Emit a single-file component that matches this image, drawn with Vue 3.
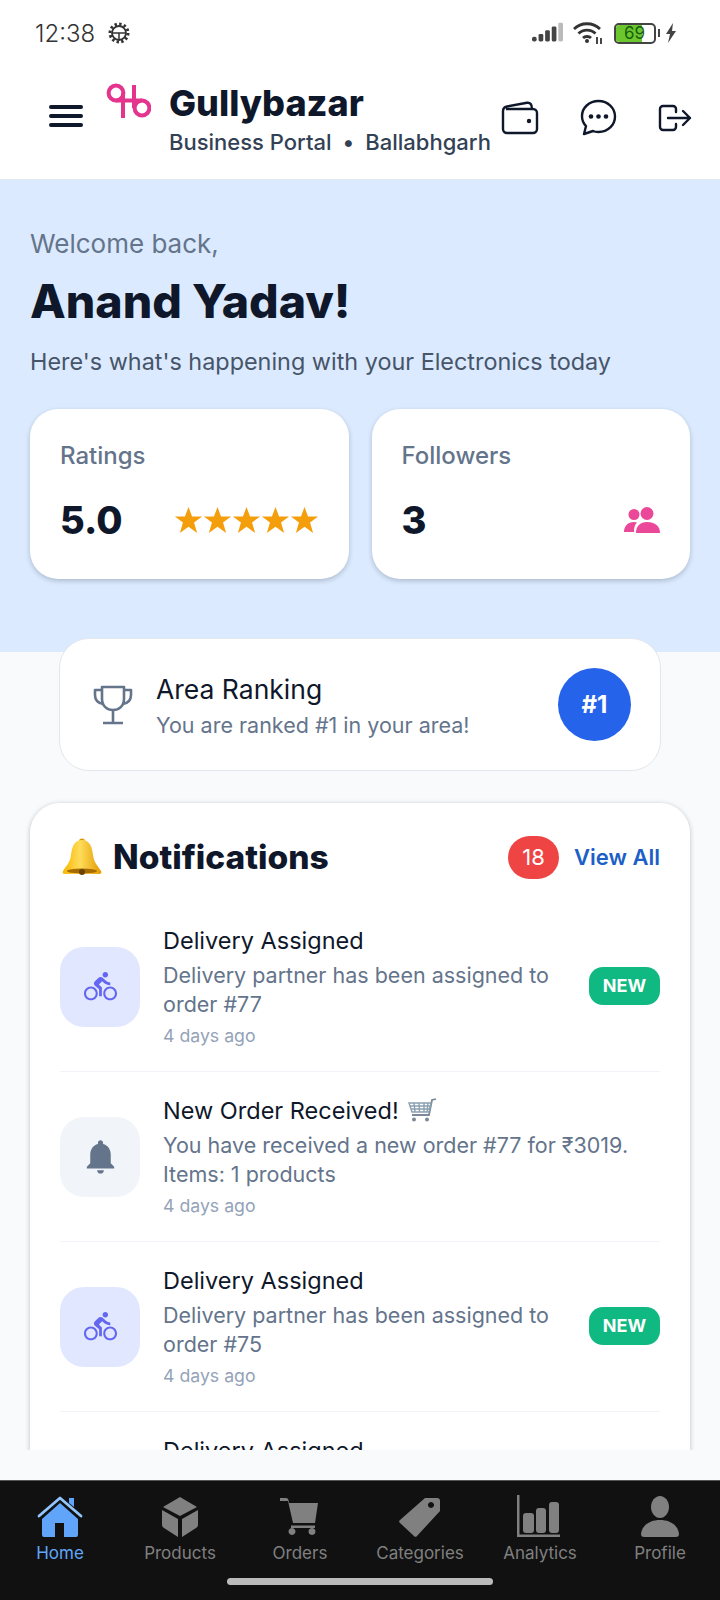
<script setup>
const notifications = [
  { title: 'Delivery Assigned', desc: 'Delivery partner has been assigned to order #77', kind: 'bike', isNew: true },
  { title: 'New Order Received!', desc: 'You have received a new order #77 for ₹3019. Items: 1 products', kind: 'bell', cart: true },
  { title: 'Delivery Assigned', desc: 'Delivery partner has been assigned to order #75', kind: 'bike', isNew: true },
  { title: 'Delivery Assigned', desc: 'Delivery partner has been assigned to order #75', kind: 'bike', isNew: true }
]

const navItems = [
  { label: 'Home', active: true, paths: [
    { d: 'M24 8L42 24V40a2 2 0 0 1-2 2H28V28H19V42H8a2 2 0 0 1-2-2V24Z' },
    { d: 'M33 3h5v9l-5-4Z' },
    { d: 'M3 21L24 3L45 21', stroke: true }
  ] },
  { label: 'Products', paths: [
    { d: 'M24 2L41 12L24 21L7 12Z' },
    { d: 'M6 15L22 24V42L8 33Q6 32 6 30Z' },
    { d: 'M42 15L26 24V42L40 33Q42 32 42 30Z' }
  ] },
  { label: 'Orders', paths: [
    { d: 'M4 3H10Q12 3 12.500 5L13 8H42L39 28H17L12 6H4Z' },
    { d: 'M15 30.500H39V33H15Z' },
    { d: 'M36 33a3.500 3.500 0 1 1-0.010 0Z' },
    { d: 'M16 33a3.500 3.500 0 1 1-0.010 0Z' }
  ] },
  { label: 'Categories', paths: [
    { d: 'M29 3H41a3 3 0 0 1 3 3V16L21 41a2 2 0 0 1-3 0L4 28a2 2 0 0 1 0-3ZM35 7a3 3 0 1 0 0.010 0Z', evenodd: true }
  ] },
  { label: 'Analytics', paths: [
    { d: 'M1 0H3.500V39.500H44V42H1Z' },
    { d: 'M10 18H15a3 3 0 0 1 3 3V35a3 3 0 0 1-3 3H10a3 3 0 0 1-3-3V21a3 3 0 0 1 3-3Z' },
    { d: 'M23 13H27a3 3 0 0 1 3 3V35a3 3 0 0 1-3 3H23a3 3 0 0 1-3-3V16a3 3 0 0 1 3-3Z' },
    { d: 'M36 7H40a3 3 0 0 1 3 3V35a3 3 0 0 1-3 3H36a3 3 0 0 1-3-3V10a3 3 0 0 1 3-3Z' }
  ] },
  { label: 'Profile', paths: [
    { d: 'M24 1C29 1 33 6 33 12S29 23 24 23S15 18 15 12S19 1 24 1Z' },
    { d: 'M8 42Q5 42 5 39C6 30 14 25 24 25S42 30 43 39Q43 42 40 42Z' }
  ] }
]
</script>

<template>
<div class="screen">
  <div class="statusBar">
    <div class="statusLeft">
      <span class="time">12:38</span>
      <svg class="gear" width="24" height="24" viewBox="0 0 24 24" fill="none" stroke="#333">
        <circle cx="12" cy="12" r="9" stroke-width="3" stroke-dasharray="2.4 2.3" />
        <circle cx="12" cy="12" r="7" stroke-width="1.800" />
        <path d="M5 12H19M12 12V19" stroke-width="1.500" />
      </svg>
    </div>
    <div class="statusRight">
      <svg width="31" height="22" viewBox="0 0 33 22" fill="#444">
        <rect x="0" y="15" width="5" height="5" rx="2" />
        <rect x="7" y="12" width="5" height="8" rx="1.500" />
        <rect x="14" y="8" width="5" height="12" rx="1.500" />
        <rect x="21" y="4" width="5" height="16" rx="1.500" />
        <rect x="28" y="0" width="5" height="20" rx="1.500" fill="#bbb" />
      </svg>
      <svg class="wifi" width="32" height="24" viewBox="0 0 32 24" fill="none" stroke="#333" stroke-width="2.800">
        <path d="M2 8C9 1 21 1 28 8" />
        <path d="M6.500 12.500C11 8 19 8 23.500 12.500" />
        <path d="M11 17C13 15 17 15 19 17" />
        <circle cx="15" cy="20" r="2" fill="#333" stroke="none" />
        <path d="M25 16V23M29 17V23" stroke-width="1.800" />
      </svg>
      <div class="battery">
        <div class="batteryFill"></div>
        <span class="batteryText">69</span>
      </div>
      <div class="batteryTip"></div>
      <svg class="bolt" width="12" height="20" viewBox="0 0 12 20" fill="#444">
        <path d="M8 0L1 11H5L3 20L11 8H7Z" />
      </svg>
    </div>
  </div>

  <header class="header">
    <button class="menu"><span></span><span></span><span></span></button>
    <svg class="logo" width="45" height="36" viewBox="0 0 45 36" fill="none" stroke="#e5348e" stroke-width="4">
      <circle cx="10" cy="10" r="7.400" />
      <circle cx="36" cy="25" r="7.400" />
      <path d="M17 10V35M28 2V25M10 17.400H36" />
    </svg>
    <div class="brand">
      <div class="brandName">Gullybazar</div>
      <div class="brandSub"><span>Business Portal</span><span class="dot">•</span><span>Ballabhgarh</span></div>
    </div>
    <div class="headerIcons">
      <svg width="38" height="34" viewBox="0 0 38 34" fill="none" stroke="#0f172a" stroke-width="2.400" stroke-linejoin="round">
        <path d="M2 10V28a4 4 0 0 0 4 4H32a4 4 0 0 0 4-4V12a4 4 0 0 0-4-4H5" />
        <path d="M2 10C2 7 4 6 6 5.500L26 1.800C29 1.300 31 3 31 8" />
        <circle cx="28" cy="20" r="2.200" fill="#0f172a" stroke="none" />
      </svg>
      <svg width="37" height="37" viewBox="0 0 37 37" fill="none" stroke="#0f172a" stroke-width="2.400" stroke-linejoin="round">
        <path d="M18.500 2C9 2 2 9 2 17C2 21 3.500 24.500 6 27L4 35L13 32C15 33 17 33 18.500 33C28 33 35 26 35 17.500C35 9 28 2 18.500 2Z" />
        <circle cx="11" cy="17.500" r="2.300" fill="#0f172a" stroke="none" />
        <circle cx="18.500" cy="17.500" r="2.300" fill="#0f172a" stroke="none" />
        <circle cx="26" cy="17.500" r="2.300" fill="#0f172a" stroke="none" />
      </svg>
      <svg width="34" height="28" viewBox="0 0 34 28" fill="none" stroke="#0f172a" stroke-width="2.400" stroke-linecap="round" stroke-linejoin="round">
        <path d="M18 8V5a3 3 0 0 0-3-3H5a3 3 0 0 0-3 3V23a3 3 0 0 0 3 3H15a3 3 0 0 0 3-3V20" />
        <path d="M10 14H32M25 7L32 14L25 21" />
      </svg>
    </div>
  </header>

  <main class="content">
    <section class="hero">
      <div class="welcome">Welcome back,</div>
      <h1 class="userName">Anand Yadav!</h1>
      <p class="heroSub">Here's what's happening with your Electronics today</p>
      <div class="stats">
        <div class="statCard">
          <div class="statLabel">Ratings</div>
          <div class="statRow">
            <span class="statValue">5.0</span>
            <span class="stars">
              <svg v-for="n in 5" :key="n" width="29" height="26" viewBox="0 0 24 22" fill="#f59e0b">
                <path d="M12 0L15 8H23.500L16.700 13.200L19.300 22L12 16.700L4.700 22L7.300 13.200L0.500 8H9Z" />
              </svg>
            </span>
          </div>
        </div>
        <div class="statCard">
          <div class="statLabel">Followers</div>
          <div class="statRow">
            <span class="statValue">3</span>
            <svg width="36" height="27" viewBox="0 0 36 27" fill="#ec4899">
              <circle cx="10" cy="7.500" r="5.500" />
              <circle cx="23" cy="6.500" r="6.500" />
              <path d="M0 25C0 19 4 15 10 15C11 15 12 15.200 13 15.500C10.500 18 10 21 10 25Z" />
              <path d="M12 26C12 19 16 15 23 15C31 15 36 19 36 26Z" />
            </svg>
          </div>
        </div>
      </div>
    </section>

    <section class="rankCard">
      <svg class="trophy" width="40" height="40" viewBox="0 0 40 40" fill="none" stroke="#64748b" stroke-width="2.600" stroke-linejoin="round">
        <path d="M9 2H31V14C31 21 26 25 20 25C14 25 9 21 9 14Z" />
        <path d="M9 5H2V10C2 15 5 18 10 19M31 5H38V10C38 15 35 18 30 19" />
        <path d="M20 25V37M10 38H30" />
      </svg>
      <div class="rankText">
        <div class="rankTitle">Area Ranking</div>
        <div class="rankSub">You are ranked #1 in your area!</div>
      </div>
      <div class="rankBadge">#1</div>
    </section>

    <section class="notifCard">
      <div class="notifHeader">
        <svg class="bellEmoji" width="42" height="38" viewBox="0 0 42 38">
          <defs>
            <linearGradient id="bellGold" x1="0" y1="0" x2="1" y2="0">
              <stop offset="0" stop-color="#f7b500" />
              <stop offset="0.450" stop-color="#ffdc5a" />
              <stop offset="1" stop-color="#e39a00" />
            </linearGradient>
          </defs>
          <circle cx="21" cy="3.500" r="3" fill="#d99a00" />
          <path d="M21 2C29 2 31 9 32 17C33 25 37 28 40 33C41 35 40 36 38 36H4C2 36 1 35 2 33C5 28 9 25 10 17C11 9 13 2 21 2Z" fill="url(#bellGold)" />
          <ellipse cx="21" cy="33" rx="15" ry="2.500" fill="#a86b00" />
          <circle cx="21" cy="34" r="3" fill="#6b4300" />
        </svg>
        <h2 class="notifTitle">Notifications</h2>
        <span class="countBadge">18</span>
        <a class="viewAll">View All</a>
      </div>

      <div v-for="(item, i) in notifications" :key="i" class="notifRow">
        <div class="notifIcon" :class="item.kind">
          <svg v-if="item.kind === 'bike'" width="33" height="33" viewBox="0 0 24 24" fill="#6366f1">
            <path d="M15.500 5.500c1.100 0 2-.9 2-2s-.9-2-2-2-2 .9-2 2 .9 2 2 2zM5 12c-2.800 0-5 2.200-5 5s2.200 5 5 5 5-2.200 5-5-2.200-5-5-5zm0 8.500c-1.900 0-3.500-1.600-3.500-3.500s1.600-3.500 3.500-3.500 3.500 1.600 3.500 3.500-1.600 3.500-3.500 3.500zm5.800-10l2.400-2.400.8.800c1.300 1.300 3 2.100 5.100 2.100V9c-1.500 0-2.700-.6-3.600-1.500l-1.900-1.900c-.5-.4-1-.6-1.600-.6s-1.100.2-1.400.6L7.800 8.400c-.4.400-.6.900-.6 1.400 0 .6.200 1.100.6 1.400L11 14v5h2v-6.200l-2.200-2.300zM19 12c-2.800 0-5 2.200-5 5s2.200 5 5 5 5-2.200 5-5-2.200-5-5-5zm0 8.500c-1.900 0-3.500-1.600-3.500-3.500s1.600-3.500 3.500-3.500 3.500 1.600 3.500 3.500-1.600 3.500-3.500 3.500z" />
          </svg>
          <svg v-else width="41" height="41" viewBox="0 0 24 24" fill="#64748b">
            <path d="M12 22c1.100 0 2-.9 2-2h-4c0 1.100.9 2 2 2zm6-6v-5c0-3.070-1.630-5.640-4.500-6.320V4c0-.83-.67-1.500-1.500-1.500s-1.500.67-1.500 1.500v.68C7.640 5.360 6 7.920 6 11v5l-2 2v1h16v-1l-2-2z" />
          </svg>
        </div>
        <div class="notifBody">
          <div class="rowTitle">
            {{ item.title }}
            <svg v-if="item.cart" class="cartEmoji" width="30" height="25" viewBox="0 0 30 25" fill="none" stroke="#8aa0b0" stroke-width="1.400">
              <path d="M29 1L25 2L22 17H5" stroke="#7b8a96" stroke-width="1.800" />
              <path d="M2 5H24L22 14H5ZM7 5L8 14M12 5L12.500 14M17 5L17 14M21 5L20 14M3 8H23M4 11H22" />
              <circle cx="7" cy="21.500" r="2" fill="#7b8a96" stroke="none" />
              <circle cx="20" cy="21.500" r="2" fill="#7b8a96" stroke="none" />
            </svg>
          </div>
          <div class="rowDesc">{{ item.desc }}</div>
          <div class="rowTime">4 days ago</div>
        </div>
        <span v-if="item.isNew" class="newBadge">NEW</span>
      </div>
    </section>
  </main>

  <nav class="bottomNav">
    <div class="navItems">
      <div v-for="item in navItems" :key="item.label" class="navItem" :class="{ active: item.active }">
        <svg width="48" height="44" viewBox="0 0 48 44">
          <template v-for="(p, i) in item.paths" :key="i">
            <path v-if="p.stroke" :d="p.d" fill="none" stroke="#93c5fd" stroke-width="2.800" stroke-linecap="round" stroke-linejoin="round" />
            <path v-else :d="p.d" fill="currentColor" :fill-rule="p.evenodd ? 'evenodd' : 'nonzero'" />
          </template>
        </svg>
        <span class="navLabel">{{ item.label }}</span>
      </div>
    </div>
    <div class="homeBar"></div>
  </nav>
</div>
</template>

<style>
html, body {
  margin: 0;
  background: #f8fafc;
}
</style>

<style scoped>
* {
  box-sizing: border-box;
  font-family: Inter, "Noto Sans", sans-serif;
}

.screen {
  display: flex;
  flex-direction: column;
  width: 720px;
  height: 1600px;
  overflow: hidden;
  background-color: #f8fafc;
}

.statusBar {
  display: flex;
  justify-content: space-between;
  align-items: center;
  height: 66px;
  padding: 0 43px 0 35px;
  background-color: #fff;
}

.statusLeft,
.statusRight {
  display: flex;
  align-items: center;
}

.time {
  font-size: 24px;
  font-weight: 300;
  color: #333;
}

.gear {
  margin-left: 12px;
}

.wifi {
  margin-left: 9px;
}

.battery {
  position: relative;
  width: 42px;
  height: 21px;
  margin-left: 10px;
  border: 2px solid #444;
  border-radius: 5px;
  overflow: hidden;
}

.batteryFill {
  width: 68%;
  height: 100%;
  background-color: #6cc72f;
}

.batteryText {
  position: absolute;
  top: -3px;
  left: 8px;
  font-size: 17px;
  line-height: 22px;
  color: #14600c;
}

.batteryTip {
  width: 2px;
  height: 8px;
  margin-left: 2px;
  background-color: #444;
}

.bolt {
  margin-left: 5px;
}

.header {
  display: flex;
  align-items: flex-start;
  height: 114px;
  padding-left: 49px;
  background-color: #fff;
  border-bottom: 1px solid #e2e8f0;
}

.menu {
  display: flex;
  flex-direction: column;
  gap: 5px;
  width: 34px;
  margin-top: 39px;
  padding: 0;
  border: 0;
  background: none;
}

.menu span {
  height: 4px;
  border-radius: 2px;
  background-color: #0f172a;
}

.logo {
  margin: 17px 0 0 23px;
}

.brand {
  margin: 14px 0 0 18px;
  width: 325px;
}

.brandName {
  font-size: 36px;
  line-height: 46px;
  font-weight: 800;
  color: #0f172a;
}

.brandSub {
  display: flex;
  gap: 11px;
  margin-top: 2px;
  font-size: 22px;
  line-height: 28px;
  font-weight: 500;
  color: #334155;
}

.headerIcons {
  display: flex;
  align-items: center;
  gap: 41px;
  margin-top: 33px;
  margin-left: 7px;
}

.content {
  flex: 1;
  min-height: 0;
  margin-bottom: 30px;
  overflow: hidden;
}

.hero {
  height: 472px;
  padding: 47px 30px 0;
  background-color: #dbeafe;
}

.welcome {
  font-size: 26px;
  line-height: 34px;
  color: #64748b;
}

.userName {
  margin: 11px 0 0;
  font-size: 46.500px;
  line-height: 58px;
  font-weight: 800;
  color: #0f172a;
}

.heroSub {
  margin: 15px 0 0;
  font-size: 23.400px;
  line-height: 34px;
  color: #475569;
}

.stats {
  display: flex;
  gap: 23px;
  margin-top: 30px;
}

.statCard {
  flex: 1;
  height: 170px;
  padding: 30px 30px 0;
  background-color: #fff;
  border-radius: 28px;
  box-shadow: 0 2px 5px rgba(15, 23, 42, 0.22);
}

.statLabel {
  font-size: 24px;
  line-height: 34px;
  font-weight: 500;
  color: #64748b;
}

.statRow {
  display: flex;
  justify-content: space-between;
  align-items: center;
  margin-top: 22px;
  height: 50px;
}

.statValue {
  font-size: 38px;
  font-weight: 800;
  color: #0f172a;
}

.stars {
  display: flex;
  align-items: center;
}

.rankCard {
  display: flex;
  align-items: center;
  height: 133px;
  margin: -14px 59px 0;
  padding: 0 29px 0 33px;
  position: relative;
  background-color: #fff;
  border: 1px solid #e2e8f0;
  border-radius: 30px;
}

.rankText {
  flex: 1;
  margin-left: 23px;
}

.rankTitle {
  font-size: 26.500px;
  line-height: 36px;
  padding-top: 3px;
  color: #0f172a;
}

.rankSub {
  font-size: 21.500px;
  line-height: 32px;
  margin-top: 2px;
  color: #64748b;
}

.rankBadge {
  display: flex;
  justify-content: center;
  align-items: center;
  width: 73px;
  height: 73px;
  border-radius: 50%;
  font-size: 24px;
  font-weight: 700;
  color: #fff;
  background-color: #2563eb;
}

.notifCard {
  margin: 32px 30px 0;
  padding: 30px 30px 0;
  background-color: #fff;
  border-radius: 30px;
  box-shadow: 0 1px 5px rgba(15, 23, 42, 0.25);
}

.notifHeader {
  display: flex;
  align-items: center;
  height: 48px;
  margin-bottom: 21px;
}

.bellEmoji {
  margin-left: 1px;
}

.notifTitle {
  flex: 1;
  margin: 0 0 0 10px;
  font-size: 33.500px;
  font-weight: 800;
  color: #0f172a;
}

.countBadge {
  display: flex;
  justify-content: center;
  align-items: center;
  width: 51px;
  height: 43px;
  border-radius: 22px;
  font-size: 22px;
  color: #fff;
  background-color: #ef4444;
}

.viewAll {
  margin-left: 15px;
  font-size: 22px;
  font-weight: 600;
  color: #1d5fc7;
}

.notifRow {
  display: flex;
  align-items: center;
  padding: 21px 0;
  border-bottom: 1px solid #f1f5f9;
}

.notifIcon {
  display: flex;
  flex-shrink: 0;
  justify-content: center;
  align-items: center;
  width: 80px;
  height: 80px;
  margin-right: 23px;
  border-radius: 24px;
}

.notifIcon.bike {
  background-color: #e0e7ff;
}

.notifIcon.bell {
  background-color: #f1f5f9;
}

.notifBody {
  flex: 1;
  min-width: 0;
}

.rowTitle {
  display: flex;
  align-items: center;
  gap: 8px;
  height: 34px;
  font-size: 23.500px;
  color: #0f172a;
}

.rowDesc {
  margin-top: 4px;
  font-size: 21.500px;
  line-height: 29px;
  color: #64748b;
}

.rowTime {
  margin-top: 3px;
  font-size: 17.700px;
  line-height: 28px;
  color: #94a3b8;
}

.newBadge {
  flex-shrink: 0;
  align-self: flex-start;
  width: 71px;
  height: 38px;
  margin: 44px 0 0 20px;
  border-radius: 14px;
  font-size: 18px;
  font-weight: 700;
  line-height: 38px;
  text-align: center;
  color: #fff;
  background-color: #10b981;
}

.bottomNav {
  flex-shrink: 0;
  height: 120px;
  background-color: #111;
  border-top: 1px solid #555;
}

.navItems {
  display: grid;
  grid-template-columns: repeat(6, 1fr);
  padding-top: 14px;
}

.navItem {
  display: flex;
  flex-direction: column;
  align-items: center;
  color: #808080;
}

.navItem.active {
  color: #60a5fa;
}

.navLabel {
  margin-top: 2px;
  font-size: 17px;
  line-height: 24px;
}

.homeBar {
  width: 266px;
  height: 7px;
  margin: 13px auto 0;
  border-radius: 4px;
  background-color: #bbb;
}
</style>
